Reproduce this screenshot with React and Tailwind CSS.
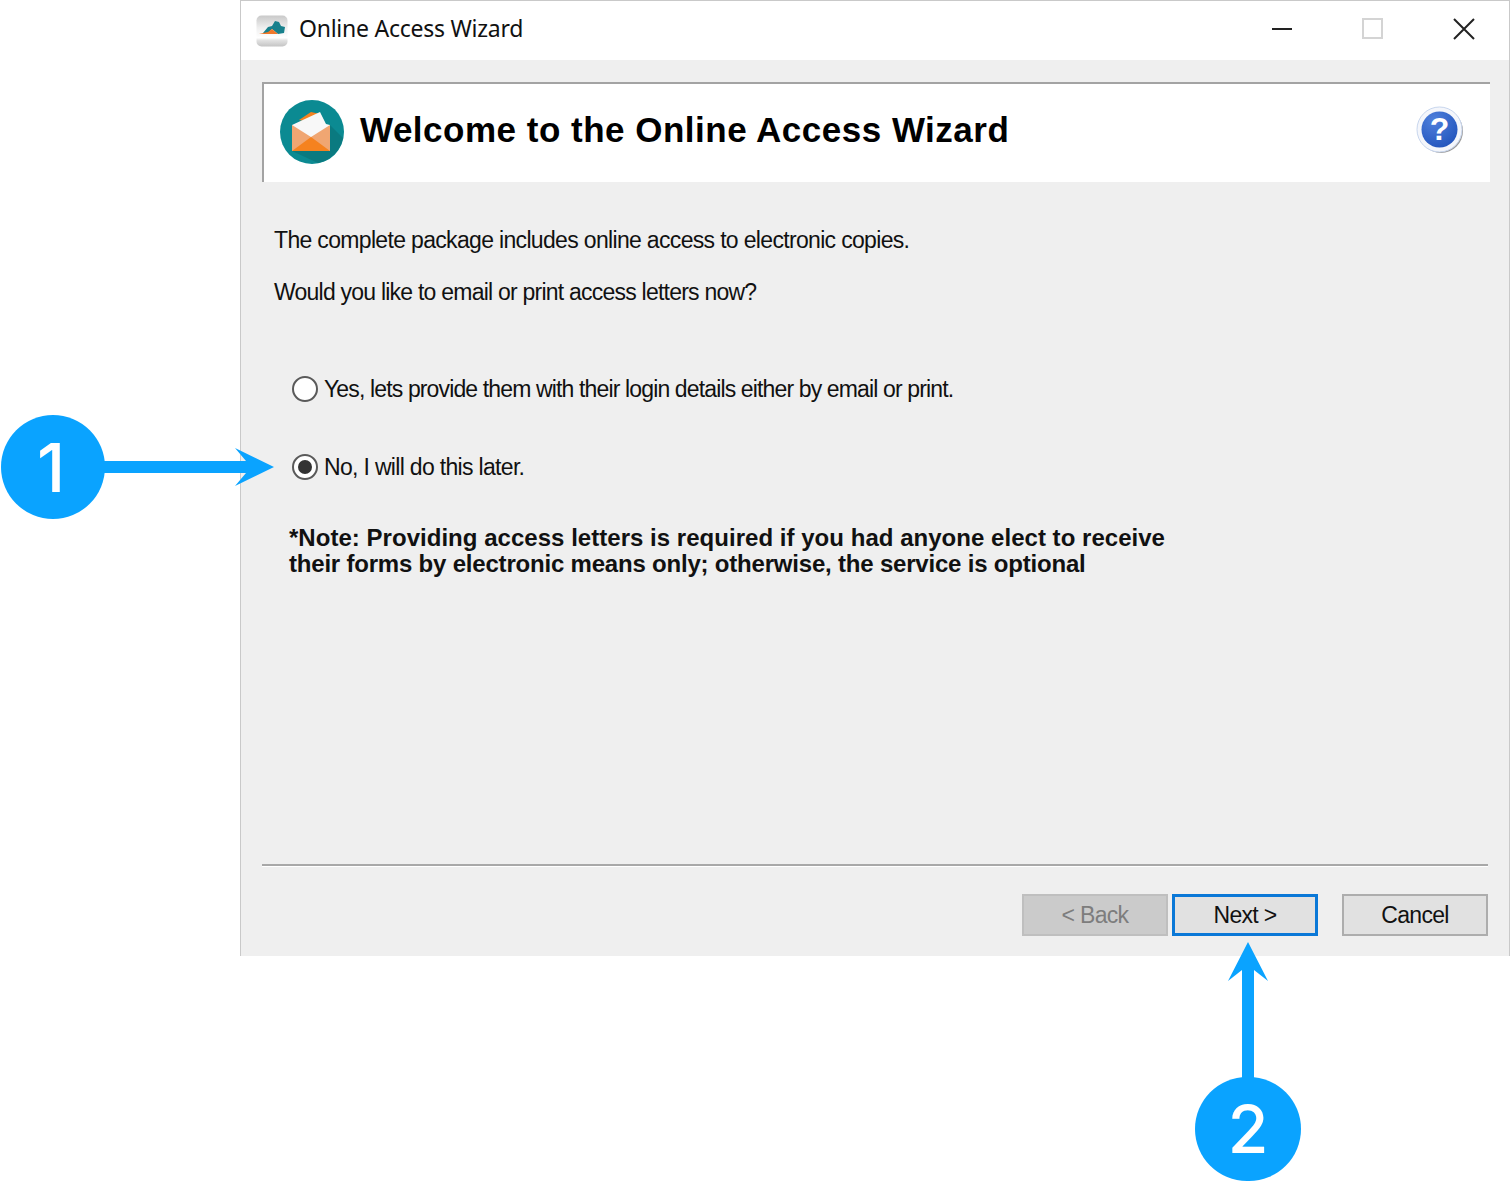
const ui = { fontFamily: '"Liberation Sans", sans-serif' };

function AppIcon() {
  return (
    <svg width="32" height="32" viewBox="0 0 32 32" className="shrink-0">
      <defs>
        <linearGradient id="appBg" x1="0" y1="0" x2="0" y2="1">
          <stop offset="0" stopColor="#c9c9c9" />
          <stop offset="0.4" stopColor="#efefef" />
          <stop offset="0.72" stopColor="#ffffff" />
          <stop offset="0.8" stopColor="#e2e2e2" />
          <stop offset="1" stopColor="#c4c4c4" />
        </linearGradient>
      </defs>
      <rect x="0.5" y="0.5" width="31" height="31" rx="5" fill="url(#appBg)" />
      <path d="M7 18 L12 12 L16 11 L19 6 L23 7 L25 11 L29 12 L28 18 L22 19 L16 14 L12 18 Z" fill="#17808c" />
      <path d="M3 19 L12 17 L16 14 L22 19 Z" fill="#f0782a" />
    </svg>
  );
}

function EnvelopeIcon() {
  return (
    <svg width="64" height="64" viewBox="0 0 64 64" className="shrink-0">
      <circle cx="32" cy="32" r="32" fill="#0b8a92" />
      <path d="M50 25 L63 38 A32 32 0 0 1 38 63 L12 51 Z" fill="#0a7a80" />
      <path d="M12 25 L50 25 V51 H12 Z" fill="#f0a672" />
      <path d="M19 20 L31 12 L40 14 L44 25 Z" fill="#f5821f" />
      <path d="M12 25 L40 12 L46 24 L50 25 L31 37 Z" fill="#f8f8f8" />
      <path d="M12 51 L31 37 L50 51 Z" fill="#f5821f" />
    </svg>
  );
}

function HelpIcon() {
  return (
    <svg width="48" height="48" viewBox="0 0 48 48" className="shrink-0">
      <defs>
        <radialGradient id="helpBlue" cx="0.35" cy="0.25" r="0.8">
          <stop offset="0" stopColor="#4f80dc" />
          <stop offset="1" stopColor="#2355bd" />
        </radialGradient>
      </defs>
      <circle cx="25" cy="25" r="22" fill="#9a9a9a" />
      <circle cx="23.500" cy="23.500" r="22.500" fill="#f4f6fb" stroke="#c8d6ee" />
      <circle cx="23.500" cy="23.500" r="18" fill="url(#helpBlue)" />
      <text x="23.500" y="34" textAnchor="middle" fontSize="32" fontWeight="700" fill="#fff" fontFamily="Liberation Sans, sans-serif">?</text>
    </svg>
  );
}

function Radio({ checked, label, className }) {
  return (
    <div className="flex items-center gap-[6px] h-[30px] text-[23px] text-[#111]">
      <span className="flex items-center justify-center w-[26px] h-[26px] rounded-full border-2 border-[#5a5a5a] bg-white shrink-0">
        {checked && <span className="w-[14px] h-[14px] rounded-full bg-[#333]" />}
      </span>
      <span className={`pt-[1px] ${className}`}>{label}</span>
    </div>
  );
}

function WizButton({ children, className }) {
  return (
    <button className={`w-[146px] h-[42px] flex items-center justify-center pt-[1px] text-[23px] tracking-[-0.7px] ${className}`}>
      {children}
    </button>
  );
}

export default function App() {
  return (
    <div className="relative w-[1510px] h-[1184px] bg-white overflow-hidden" style={ui}>
      <div className="ml-[240px] w-[1270px] h-[956px] flex flex-col bg-[#efefef] border-l border-r border-t border-[#c9c9c9]">
        {/* title bar */}
        <div className="h-[59px] bg-white flex items-center pl-[15px] shrink-0">
          <AppIcon />
          <span className="ml-[11px] mb-[4px] text-[23px] text-[#111] tracking-[-0.25px]" style={{ fontFamily: '"Noto Sans", sans-serif' }}>Online Access Wizard</span>
          <div className="ml-auto flex items-center mr-[34px] mb-[4px]">
            <span className="w-[20px] h-[2px] bg-[#222]" />
            <span className="ml-[70px] w-[21px] h-[21px] border-2 border-[#d4d4d4]" />
            <svg width="22" height="22" viewBox="0 0 22 22" className="ml-[70px]">
              <path d="M1 1 L21 21 M21 1 L1 21" stroke="#222" strokeWidth="2" />
            </svg>
          </div>
        </div>

        {/* header panel */}
        <div className="mt-[22px] ml-[21px] mr-[19px] h-[100px] bg-white border-t-2 border-l-2 border-[#a3a3a3] flex items-center pl-[16px] pr-[26px] shrink-0">
          <div className="mb-[2px]"><EnvelopeIcon /></div>
          <h1 className="ml-[16px] mb-[8px] text-[35px] leading-none font-bold text-black tracking-[0.5px]">
            Welcome to the Online Access Wizard
          </h1>
          <div className="ml-auto mb-[6px]"><HelpIcon /></div>
        </div>

        {/* content */}
        <div className="flex-1 pl-[33px] pt-[43px]">
          <p className="text-[23px] leading-[30px] text-[#111] tracking-[-0.67px]">The complete package includes online access to electronic copies.</p>
          <p className="mt-[22px] text-[23px] leading-[30px] text-[#111] tracking-[-0.77px]">Would you like to email or print access letters now?</p>
          <div className="mt-[67px] ml-[18px] flex flex-col gap-[48px]">
            <Radio label="Yes, lets provide them with their login details either by email or print." className="tracking-[-0.86px]" />
            <Radio checked label="No, I will do this later." className="tracking-[-0.68px]" />
          </div>
          <div className="mt-[43px] ml-[15px] text-[24px] leading-[26px] font-bold text-[#111]">
            <p className="tracking-[0.03px]">*Note: Providing access letters is required if you had anyone elect to receive</p>
            <p className="tracking-[-0.2px]">their forms by electronic means only; otherwise, the service is optional</p>
          </div>
        </div>

        {/* footer */}
        <div className="mx-[21px] h-[2px] bg-[#a8a8a8] shadow-[0_1px_0_#fff] w-[1226px] shrink-0" />
        <div className="h-[90px] flex items-start justify-end pt-[28px] pr-[21px] shrink-0">
          <WizButton className="bg-[#cbcbcb] border-2 border-[#bfbfbf] text-[#7d7d7d]">&lt; Back</WizButton>
          <WizButton className="ml-[4px] bg-[#e1e1e1] border-[3px] border-[#0a78d7] text-[#111]">Next &gt;</WizButton>
          <WizButton className="ml-[24px] bg-[#e1e1e1] border-2 border-[#adadad] text-[#111]">Cancel</WizButton>
        </div>
      </div>

      {/* callouts */}
      <div className="absolute left-[1px] top-[415px] w-[104px] h-[104px] rounded-full bg-[#0aa3ff] flex items-center justify-center pr-[4px] text-white text-[68px] leading-none font-medium font-['Inter',sans-serif]">1</div>
      <svg className="absolute left-[100px] top-[445px]" width="176" height="44" viewBox="0 0 176 44">
        <path d="M0 16 H146 L135 3 L174 22 L135 41 L146 28 H0 Z" fill="#0aa3ff" />
      </svg>
      <div className="absolute left-[1195px] top-[1077px] w-[106px] h-[104px] rounded-full bg-[#0aa3ff] flex items-center justify-center text-white text-[66px] leading-none font-medium font-['Inter',sans-serif]">2</div>
      <svg className="absolute left-[1226px] top-[940px]" width="44" height="140" viewBox="0 0 44 140">
        <path d="M16 140 V30 L2 41 L22 2 L42 41 L28 30 V140 Z" fill="#0aa3ff" />
      </svg>
    </div>
  );
}
